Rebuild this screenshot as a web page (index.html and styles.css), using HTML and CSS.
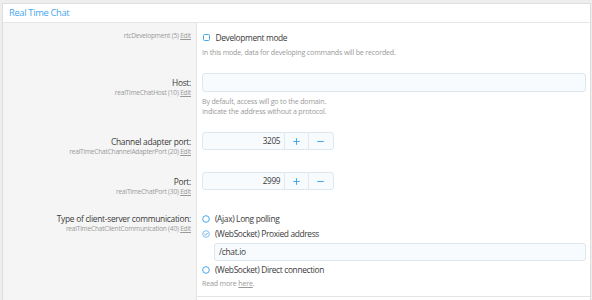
FILE: index.html
```html
<!DOCTYPE html>
<html lang="en">
<head>
<meta charset="utf-8">
<title>Real Time Chat</title>
<link rel="stylesheet" href="styles.css">
</head>
<body>
<div class="block">
  <h2 class="block-header">Real Time Chat</h2>
  <div class="block-body">

    <dl class="form-row">
      <dt><dfn class="sub">rtcDevelopment (5) <a class="edit">Edit</a></dfn></dt>
      <dd>
        <label class="choice">
          <span class="check"></span><span>Development mode</span>
        </label>
        <div class="explain">In this mode, data for developing commands will be recorded.</div>
      </dd>
    </dl>

    <dl class="form-row form-row--input">
      <dt><label class="label">Host:</label><dfn class="sub">realTimeChatHost (10) <a class="edit">Edit</a></dfn></dt>
      <dd>
        <div class="input input--tall"></div>
        <div class="explain explain--gap">By default, access will go to the domain.<br>Indicate the address without a protocol.</div>
      </dd>
    </dl>

    <dl class="form-row form-row--input">
      <dt><label class="label">Channel adapter port:</label><dfn class="sub">realTimeChatChannelAdapterPort (20) <a class="edit">Edit</a></dfn></dt>
      <dd>
        <div class="num">
          <span class="num-value">3205</span>
          <span class="num-btn"><svg width="7" height="7" viewBox="0 0 7 7"><path d="M3.5 0.3V6.7M0.3 3.5H6.7" stroke="currentColor" stroke-width="1.1" fill="none"/></svg></span>
          <span class="num-btn num-btn--last"><svg width="7" height="7" viewBox="0 0 7 7"><path d="M0.3 3.5H6.7" stroke="currentColor" stroke-width="1.1" fill="none"/></svg></span>
        </div>
      </dd>
    </dl>

    <dl class="form-row form-row--input">
      <dt><label class="label">Port:</label><dfn class="sub">realTimeChatPort (30) <a class="edit">Edit</a></dfn></dt>
      <dd>
        <div class="num">
          <span class="num-value">2999</span>
          <span class="num-btn"><svg width="7" height="7" viewBox="0 0 7 7"><path d="M3.5 0.3V6.7M0.3 3.5H6.7" stroke="currentColor" stroke-width="1.1" fill="none"/></svg></span>
          <span class="num-btn num-btn--last"><svg width="7" height="7" viewBox="0 0 7 7"><path d="M0.3 3.5H6.7" stroke="currentColor" stroke-width="1.1" fill="none"/></svg></span>
        </div>
      </dd>
    </dl>

    <dl class="form-row">
      <dt><label class="label">Type of client-server communication:</label><dfn class="sub">realTimeChatClientCommunication (40) <a class="edit">Edit</a></dfn></dt>
      <dd>
        <label class="choice">
          <svg class="radio" width="8" height="8" viewBox="0 0 8 8"><circle cx="4" cy="4" r="3.3" stroke="#47a7eb" stroke-width="1" fill="#fff"/></svg><span>(Ajax) Long polling</span>
        </label>
        <label class="choice choice--gap">
          <svg class="radio" width="8" height="8" viewBox="0 0 8 8"><circle cx="4" cy="4" r="3.3" stroke="#7fbfee" stroke-width="1" fill="#fff"/><path d="M2.4 4.1L3.6 5.2L5.7 2.9" stroke="#47a7eb" stroke-width="0.9" fill="none"/></svg><span>(WebSocket) Proxied address</span>
        </label>
        <div class="dependent">
          <div class="input input--text">/chat.io</div>
        </div>
        <label class="choice">
          <svg class="radio" width="8" height="8" viewBox="0 0 8 8"><circle cx="4" cy="4" r="3.3" stroke="#47a7eb" stroke-width="1" fill="#fff"/></svg><span>(WebSocket) Direct connection</span>
        </label>
        <div class="explain explain--small">Read more <a class="edit">here</a>.</div>
      </dd>
    </dl>

    <div class="row-sep"></div>
  </div>
</div>
</body>
</html>
```

FILE: styles.css
```css
* { box-sizing: border-box; }

html, body { height: 100%; }

body {
  margin: 0;
  padding: 3px 1px 0 2px;
  background: #eeeeee;
  font-family: "Open Sans", "Noto Sans", sans-serif;
  color: #3a3a3a;
  overflow: hidden;
}

.block {
  background: #fff;
  border: 1px solid #dedede;
  border-bottom: none;
  height: 297px;
  overflow: hidden;
}

.block-header {
  margin: 0;
  padding: 0 6px;
  font-size: 9.4px;
  letter-spacing: -0.35px;
  font-weight: normal;
  line-height: 18px;
  color: #47a7eb;
  border-bottom: 1px solid #e6e6e6;
}

.block-body {
  height: 100%;
  background: linear-gradient(to right, #f5f5f5 0, #f5f5f5 193px, #e4e4e4 193px, #e4e4e4 194px, #fff 194px);
}

.form-row {
  display: grid;
  grid-template-columns: 194px 1fr;
  margin: 0;
}

.form-row dt {
  padding: 8px 6px 7.5px 0;
  text-align: right;
}

.form-row dd {
  margin: 0;
  padding: 8px 4px 8px 5px;
}

.label {
  display: block;
  font-size: 8.4px;
  letter-spacing: -0.28px;
  line-height: 13px;
  color: #3a3a3a;
}

.form-row--input .label { padding-top: 3px; }

.sub {
  display: block;
  font-style: normal;
  font-size: 6.6px;
  letter-spacing: -0.22px;
  line-height: 10px;
  color: #9a9a9a;
}

.label + .sub { margin-top: -1.5px; }

.edit {
  color: #9a9a9a;
  text-decoration: underline;
}

.choice {
  display: flex;
  align-items: center;
  font-size: 8.4px;
  letter-spacing: -0.35px;
  line-height: 13px;
  color: #3a3a3a;
}

.choice--gap { margin-top: 2px; }

.check {
  width: 7px;
  height: 7px;
  margin: 0 6px 0 0.5px;
  border: 1px solid #47a7eb;
  border-radius: 1.5px;
  background: #fff;
}

.radio {
  margin-right: 5px;
  flex: none;
}

.explain {
  margin-top: 3px;
  font-size: 7.1px;
  letter-spacing: -0.18px;
  line-height: 10px;
  color: #9a9a9a;
}

.explain--gap { margin-top: 4px; }
.explain--small { margin-top: 2px; }

.input {
  background: #f7fbfe;
  border: 1px solid #dfe7ee;
  border-radius: 3px;
}

.input--tall { height: 19px; }

.dependent {
  padding-left: 12px;
  margin: 3px 0 2px;
}

.input--text {
  height: 18px;
  padding-left: 4px;
  font-size: 8.4px;
  letter-spacing: -0.3px;
  line-height: 16px;
  color: #3a3a3a;
}

.num {
  display: flex;
  width: 131.5px;
  height: 18px;
  background: #f7fbfe;
  border: 1px solid #dfe7ee;
  border-radius: 3px;
}

.num-value {
  width: 81.5px;
  padding-right: 4px;
  text-align: right;
  font-size: 8.2px;
  letter-spacing: -0.3px;
  line-height: 16px;
  color: #3a3a3a;
}

.num-btn {
  display: flex;
  align-items: center;
  justify-content: center;
  width: 24px;
  border-left: 1px solid #e2e8ee;
  color: #47a7eb;
}

.num-btn--last { width: 24.5px; }

.row-sep {
  margin-left: 194px;
  border-top: 1px solid #e4e4e4;
}
```
